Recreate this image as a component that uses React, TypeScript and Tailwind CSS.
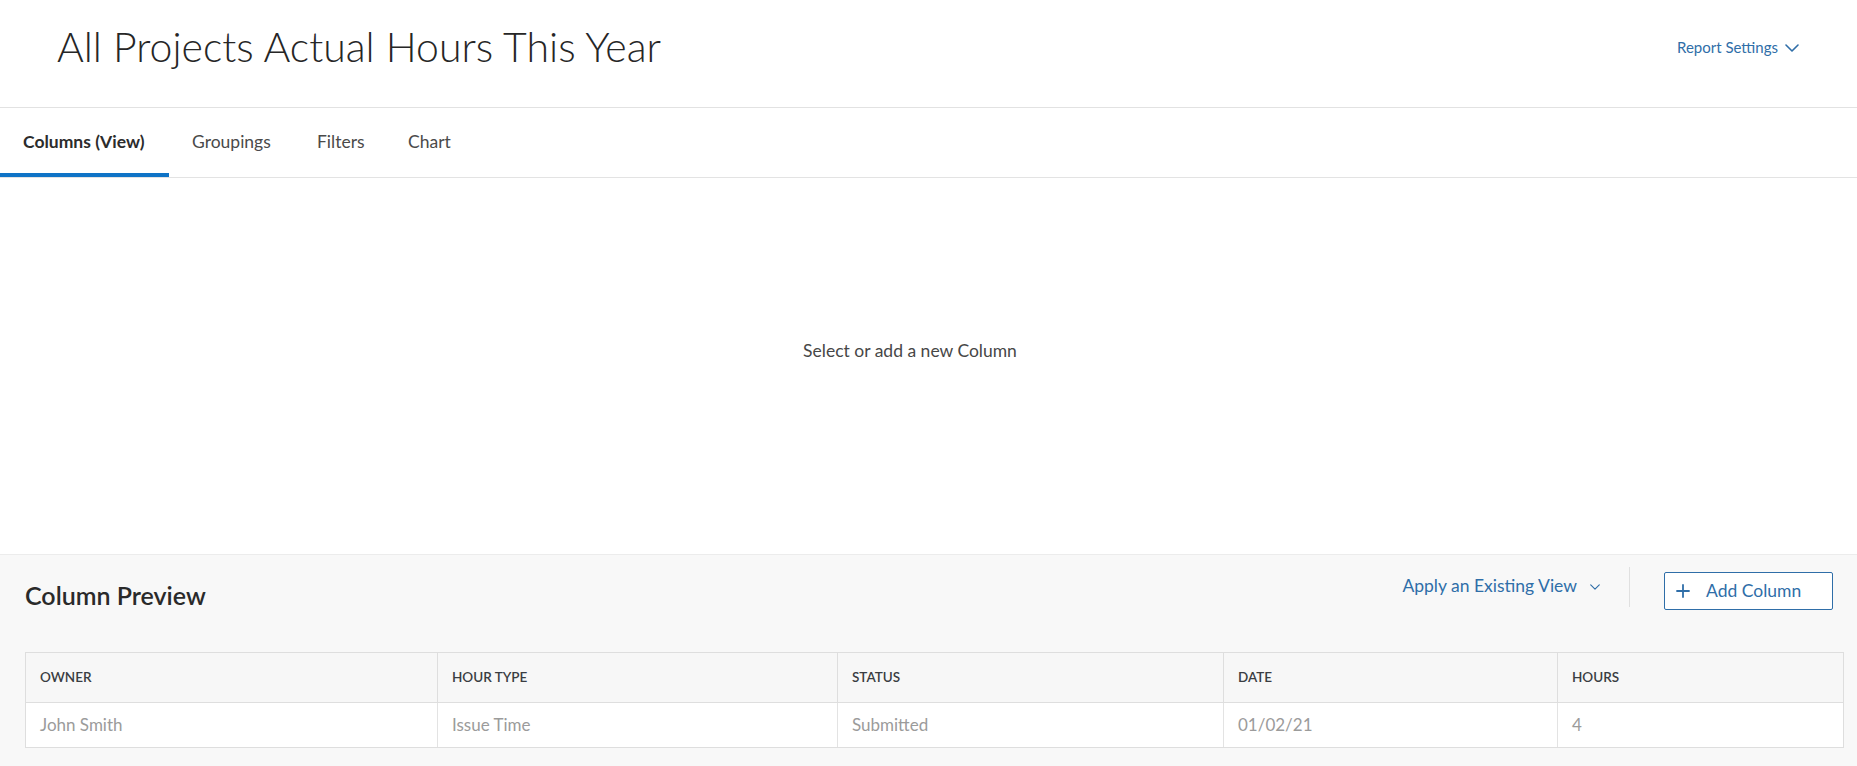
import React from "react";

const font = { fontFamily: "Lato, 'Open Sans', Arial, sans-serif" };

const tabs = [
  { label: "Columns (View)", width: "w-[169px]" },
  { label: "Groupings", width: "w-[125px]" },
  { label: "Filters", width: "w-[91px]" },
  { label: "Chart", width: "w-[90px]" },
];

const previewColumns = [
  { label: "OWNER", value: "John Smith" },
  { label: "HOUR TYPE", value: "Issue Time" },
  { label: "STATUS", value: "Submitted" },
  { label: "DATE", value: "01/02/21" },
  { label: "HOURS", value: "4" },
];

function Chevron({ className }: { className?: string }) {
  return (
    <svg viewBox="0 0 14 8" className={className} fill="none">
      <path d="M1 1l6 6 6-6" stroke="currentColor" strokeWidth="1.6" strokeLinecap="round" strokeLinejoin="round" />
    </svg>
  );
}

function PlusIcon() {
  return (
    <svg viewBox="0 0 14 14" className="w-[14px] h-[14px]" fill="none">
      <path d="M7 1v12M1 7h12" stroke="currentColor" strokeWidth="1.8" strokeLinecap="round" />
    </svg>
  );
}

export default function App() {
  return (
    <div className="w-[1857px] h-[766px] bg-white flex flex-col overflow-hidden" style={font}>
      {/* page header */}
      <div className="h-[108px] flex items-center justify-between border-b border-[#e2e2e2] pl-[57px] pr-[58px] shrink-0">
        <h1 className="text-[41px] font-light text-[#262626] leading-none -mt-[14px]">
          All Projects Actual Hours This Year
        </h1>
        <button className="flex items-center gap-[7px] text-[15px] text-[#2f6ea8] -mt-[12px]">
          Report Settings
          <Chevron className="w-[14px] h-[8px]" />
        </button>
      </div>

      {/* tabs */}
      <div className="h-[70px] flex items-end border-b border-[#e3e3e3] shrink-0">
        {tabs.map((tab, i) => (
          <div
            key={tab.label}
            className={`h-full flex items-center px-[23px] pt-[4px] text-[17.5px] border-b-4 whitespace-nowrap ${tab.width} ${
              i === 0 ? "border-[#0f73c6] font-bold text-[#2c2c2c]" : "border-transparent text-[#4a4a4a]"
            }`}
          >
            {tab.label}
          </div>
        ))}
      </div>

      {/* empty state */}
      <div className="h-[376px] flex items-center justify-center pr-[37px] pb-[30px] shrink-0">
        <p className="text-[17.5px] text-[#474747]">Select or add a new Column</p>
      </div>

      {/* column preview */}
      <div className="flex-1 bg-[#f8f8f8] border-t border-[#ececec] pl-[25px] pr-[13px] pt-[17px]">
        <div className="flex items-center justify-between h-[38px]">
          <h2 className="text-[25px] font-semibold text-[#2a2a2a] mt-[10px]">Column Preview</h2>
          <div className="flex items-center pr-[11px]">
            <button className="flex items-center gap-[13px] text-[17.5px] text-[#2f6ea8] -mt-[9px]">
              Apply an Existing View
              <Chevron className="w-[10px] h-[6px]" />
            </button>
            <div className="w-px h-[40px] bg-[#e0e0e0] ml-[29px] mr-[34px] -mt-[8px]" />
            <button className="w-[169px] h-[38px] flex items-center gap-[16px] pl-[11px] border border-[#2f6ea8] rounded-[2px] text-[17.5px] text-[#2f6ea8] bg-white">
              <PlusIcon />
              Add Column
            </button>
          </div>
        </div>

        <div className="mt-[42px] border border-[#dedede] grid grid-cols-[411px_400px_386px_334px_1fr]">
          {previewColumns.map((col, i) => (
            <div
              key={col.label}
              className={`h-[50px] flex items-center px-[14px] bg-[#f7f7f7] border-b border-[#dedede] text-[13.5px] font-semibold text-[#3a3d42] ${
                i > 0 ? "border-l" : ""
              }`}
            >
              {col.label}
            </div>
          ))}
          {previewColumns.map((col, i) => (
            <div
              key={col.label + "-v"}
              className={`h-[44px] flex items-center px-[14px] bg-white border-[#e3e3e3] text-[17px] text-[#9b9b9b] ${
                i > 0 ? "border-l" : ""
              }`}
            >
              {col.value}
            </div>
          ))}
        </div>
      </div>
    </div>
  );
}
